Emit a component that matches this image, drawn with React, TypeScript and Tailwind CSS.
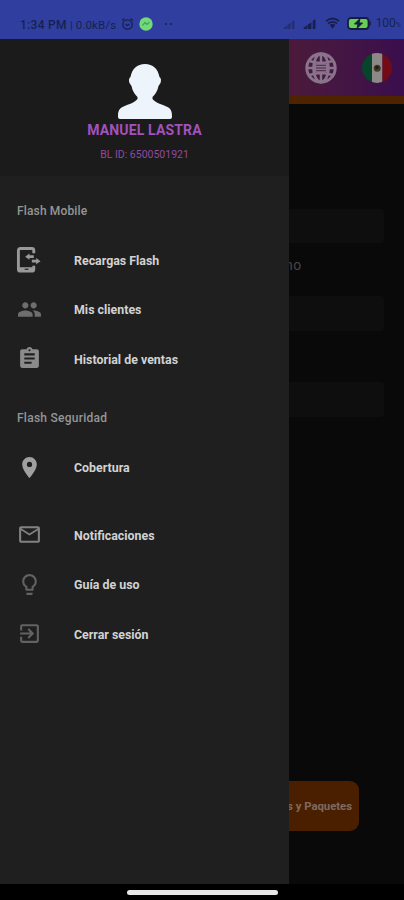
import type { ReactNode } from "react";
import {
  MdAssignment,
  MdExitToApp,
  MdLightbulbOutline,
  MdMailOutline,
  MdPeople,
  MdPlace,
} from "react-icons/md";

type MenuItemProps = {
  icon: ReactNode;
  label: string;
};

function RechargeIcon({ className }: { className?: string }) {
  return (
    <svg viewBox="0 0 26 28" className={className} fill="none">
      <path
        d="M18.5 7V4a2 2 0 0 0-2-2h-12a2 2 0 0 0-2 2v19.500a2 2 0 0 0 2 2h12a2 2 0 0 0 2-2V20"
        stroke="currentColor"
        strokeWidth="3"
      />
      <path d="M2 21.500h17v4H2z" fill="currentColor" />
      <path d="M9 23.600h4" stroke="#1f1f1f" strokeWidth="1.200" />
      <path
        d="M9.500 10.500l4.500-3.300v1.800h4.500v3H14v1.800zM25.500 15.200L21 11.900v1.800h-4.500v3H21v1.800z"
        fill="currentColor"
      />
    </svg>
  );
}

function SignalIcon({ className }: { className?: string }) {
  return (
    <svg viewBox="0 0 14 11" className={className} fill="currentColor">
      <path d="M0 11V9.500L3.500 7v4zM4.200 11V6.500L8.500 3.500V11zM10 11V2l3-2v11z" />
    </svg>
  );
}

function WifiIcon({ className }: { className?: string }) {
  return (
    <svg viewBox="0 0 16 12" className={className} fill="none" stroke="currentColor">
      <path d="M1 4q7-5.500 14 0" strokeWidth="2" />
      <path d="M3.200 6.600q4.800-3.600 9.600 0" strokeWidth="2" />
      <path d="M5 8q3-2.200 6 0l-3 4z" fill="currentColor" stroke="none" />
    </svg>
  );
}

function GlobeIcon() {
  return (
    <svg viewBox="0 0 32 32" className="size-8 text-[#89748b]" fill="none" stroke="currentColor">
      <circle cx="16" cy="16" r="14.2" strokeWidth="3" />
      <ellipse cx="16" cy="16" rx="7.500" ry="14" strokeWidth="2.800" />
      <path d="M16 2v28M2 16h28M4.500 9q11.500 4 23 0M4.500 23q11.500-4 23 0" strokeWidth="2.500" />
      <path d="M10 12h12v8H10z" fill="currentColor" stroke="none" />
      <path d="M11 13.300h10M11 16h10M11 18.700h10" stroke="#4a1b43" strokeWidth="0.900" />
    </svg>
  );
}

function FlagIcon() {
  return (
    <svg viewBox="0 0 30 30" className="size-[30px]">
      <clipPath id="flag">
        <circle cx="15" cy="15" r="15" />
      </clipPath>
      <g clipPath="url(#flag)">
        <path d="M0 0h10v30H0z" fill="#06452a" />
        <path d="M10 0h10.500v30H10z" fill="#8d8989" />
        <path d="M20.500 0H30v30h-9.500z" fill="#730b16" />
      </g>
      <circle cx="15.200" cy="15.200" r="3.500" fill="#453827" />
      <circle cx="15" cy="14.500" r="1.800" fill="#241d15" />
    </svg>
  );
}

function StatusBar() {
  return (
    <header className="flex h-[39px] shrink-0 items-end bg-[#303f9f] pb-[6px] text-[11.5px] leading-4 text-[#171f50]">
      <span className="ml-5 w-[50px] whitespace-nowrap text-[12px] font-medium tracking-[0.3px]">
        1:34 PM
      </span>
      <span className="w-[51px] whitespace-nowrap text-[11.5px] tracking-[0.1px]">| 0.0kB/s</span>
      <svg viewBox="0 0 13 14" className="mb-[2px] h-3.5 w-[13px]" fill="none" stroke="currentColor">
        <circle cx="6.500" cy="7.500" r="4.700" strokeWidth="1.300" />
        <path d="M1 3.500l2.500-2M12 3.500l-2.500-2M4.500 7l2 1.500 2-1.500" strokeWidth="1.200" />
      </svg>
      <svg viewBox="0 0 14 14" className="mb-[2px] ml-[5px] size-3.5">
        <circle cx="7" cy="7" r="6.700" fill="#74d978" />
        <path d="M3.500 8.500l2.500-3 2 2 2.500-2.500" fill="none" stroke="#3eab60" strokeWidth="1.300" />
      </svg>
      <span className="mb-[8px] ml-[12px] flex gap-[3px]">
        <i className="size-[2px] rounded-full bg-[#171f50]" />
        <i className="size-[2px] rounded-full bg-[#171f50]" />
      </span>
      <div className="ml-auto flex items-center pr-[3px]">
        <SignalIcon className="mr-[7px] mt-0.5 h-[9px] w-[13px] opacity-50" />
        <SignalIcon className="mr-[8px] mt-0.5 h-[10px] w-[14px]" />
        <WifiIcon className="mr-[7px] h-[12px] w-[15px]" />
        <svg viewBox="0 0 24 13" className="mr-[5px] h-[13px] w-6">
          <rect x="1" y="1" width="20.500" height="11" rx="3" fill="#66cf58" stroke="#151d3e" strokeWidth="1.800" />
          <path d="M23 4.500v4" stroke="#151d3e" strokeWidth="1.500" />
          <path d="M13 1.500L7.500 7H11l-1 4.500L15.500 6H12z" fill="#151d3e" stroke="#151d3e" />
        </svg>
        <span className="text-[12px]">100</span>
        <span className="mt-1 text-[7px]">%</span>
      </div>
    </header>
  );
}

function MenuItem({ icon, label }: MenuItemProps) {
  return (
    <li className="flex h-[49.5px] items-center pl-[17px]">
      <span className="flex w-[57px] items-center">{icon}</span>
      <span className="whitespace-nowrap pt-[3px] text-[12.4px] font-bold text-[#d2d2d2]">
        {label}
      </span>
    </li>
  );
}

function Drawer() {
  return (
    <aside className="flex w-[289px] shrink-0 flex-col bg-[#1f1f1f]">
      {/* Profile */}
      <div className="flex h-[137px] flex-col items-center bg-[#1b1b1b] pt-[25px]">
        <svg viewBox="0 0 54 55" className="h-[55px] w-[54px]" fill="#edf4fb">
          <path d="M27 0c8 0 13 5 14.500 13 1.500 1 2 3 1 6l-2 3c-1 5-3 8-6 11v2c3 4 9 5 15 8 4 2 4.500 5 4.500 10q0 2-2 2H2q-2 0-2-2c0-5 .5-8 4.500-10 6-3 12-4 15-8v-2c-3-3-5-6-6-11l-2-3c-1-3-.5-5 1-6C14 5 19 0 27 0z" />
        </svg>
        <p className="mt-[2px] text-[14px] font-bold leading-[18px] tracking-[0.15px] text-[#a351bd]">
          MANUEL LASTRA
        </p>
        <p className="mt-[8px] text-[10.5px] leading-4 text-[#93499f]">BL ID: 6500501921</p>
      </div>

      {/* Navigation */}
      <nav>
        <h2 className="mt-[27px] pl-[17px] text-[12px] font-medium leading-4 tracking-[0.15px] text-[#969696]">
          Flash Mobile
        </h2>
        <ul className="mt-4">
          <MenuItem
            icon={<RechargeIcon className="-ml-[1px] h-[28px] w-[25px] text-[#999999]" />}
            label="Recargas Flash"
          />
          <MenuItem icon={<MdPeople className="size-[25px] text-[#6e6e6e]" />} label="Mis clientes" />
          <MenuItem
            icon={<MdAssignment className="size-[25px] text-[#8b8b8b]" />}
            label="Historial de ventas"
          />
        </ul>

        <h2 className="mt-[26px] pl-[17px] text-[12px] font-medium leading-4 tracking-[0.25px] text-[#969696]">
          Flash Seguridad
        </h2>
        <ul className="mt-[17px]">
          <MenuItem icon={<MdPlace className="size-[25px] text-[#a0a0a0]" />} label="Cobertura" />
        </ul>

        <ul className="mt-[18px]">
          <MenuItem
            icon={<MdMailOutline className="size-[25px] text-[#828282]" />}
            label="Notificaciones"
          />
          <MenuItem
            icon={<MdLightbulbOutline className="size-[25px] text-[#626262]" />}
            label="Guía de uso"
          />
          <MenuItem
            icon={<MdExitToApp className="size-[25px] text-[#626262]" />}
            label="Cerrar sesión"
          />
        </ul>
      </nav>
    </aside>
  );
}

function DimmedPage() {
  return (
    <main className="flex min-w-0 flex-1 flex-col overflow-hidden bg-[#090909]">
      <div className="flex h-[65px] shrink-0 items-center justify-between border-b-[8px] border-[#4d2300] bg-linear-to-r from-[#4b1a3a] to-[#3b0d4d] pl-4 pr-[12px]">
        <GlobeIcon />
        <FlagIcon />
      </div>
      <div className="mt-[105px] h-[34px] w-[95px] rounded-r bg-[#0e0e0e]" />
      <p className="-ml-[4px] mt-[14px] text-[14px] leading-4 tracking-[0.5px] text-[#474747]">no</p>
      <div className="mt-[23px] h-[35px] w-[95px] rounded-r bg-[#0e0e0e]" />
      <div className="mt-[51px] h-[35px] w-[95px] rounded-r bg-[#0e0e0e]" />
      <div className="mt-[364px] flex h-[50px] w-[70px] items-center justify-end rounded-r-[9px] bg-[#4a1f00] pr-[7px]">
        <span className="whitespace-nowrap pt-[2px] text-[11.3px] font-bold text-[#806a60]">
          Recargas y Paquetes
        </span>
      </div>
    </main>
  );
}

export default function App() {
  return (
    <div className="flex h-[900px] w-[404px] flex-col overflow-hidden bg-black font-['Roboto',sans-serif]">
      <StatusBar />
      <div className="flex h-[845px] shrink-0">
        <Drawer />
        <DimmedPage />
      </div>
      <footer className="flex h-4 justify-center pt-[6px]">
        <div className="h-[5px] w-[151px] rounded-full bg-[#e8e8e8]" />
      </footer>
    </div>
  );
}
